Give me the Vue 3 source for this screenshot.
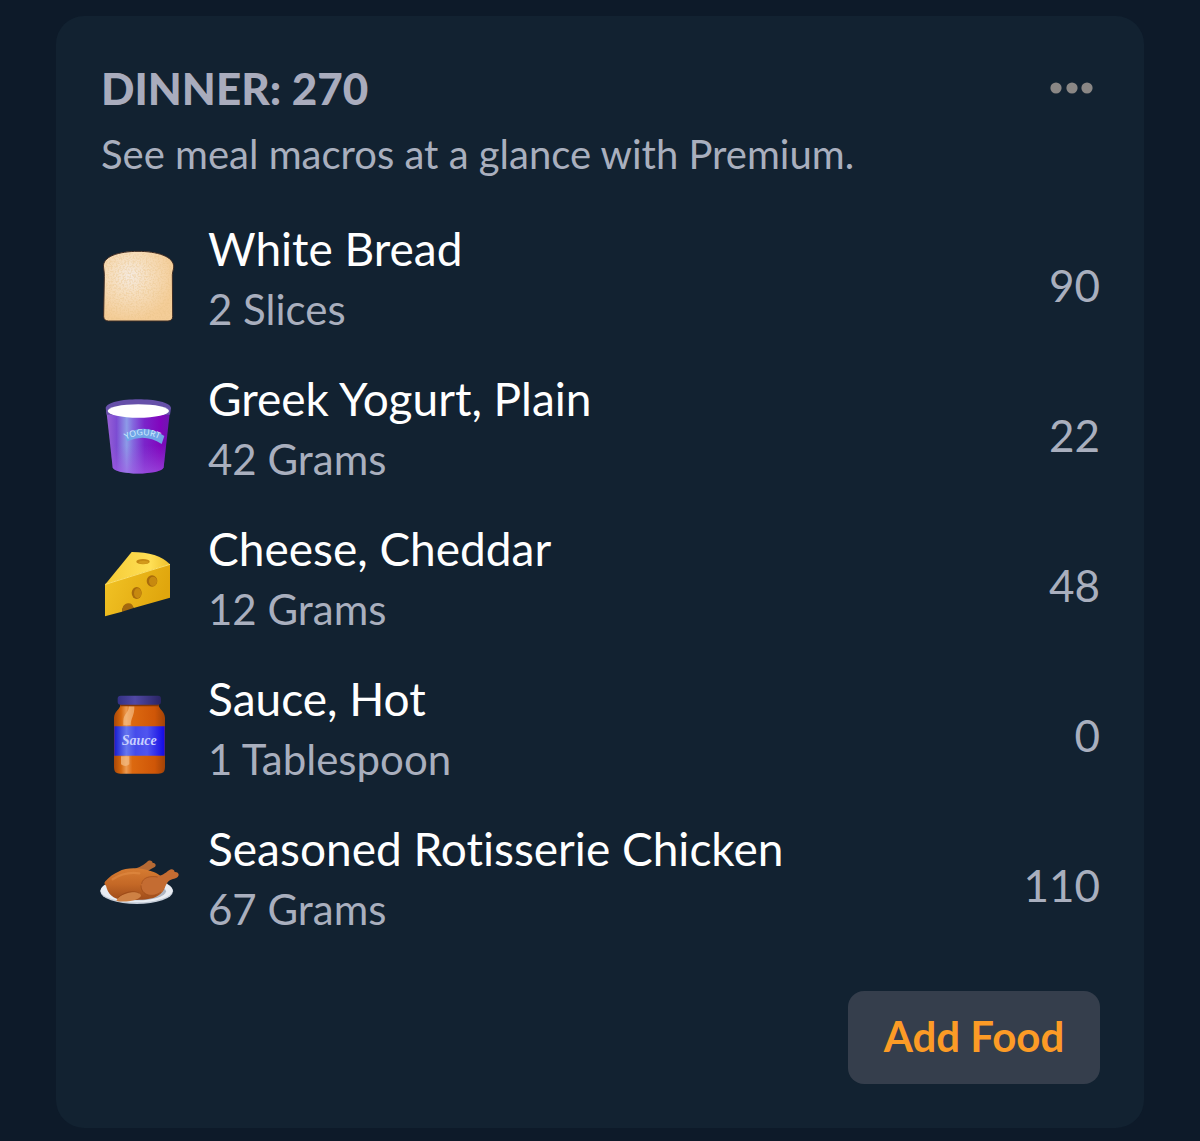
<script setup>
const foods = [
  { icon: 'bread', name: 'White Bread', amount: '2 Slices', calories: 90 },
  { icon: 'yogurt', name: 'Greek Yogurt, Plain', amount: '42 Grams', calories: 22 },
  { icon: 'cheese', name: 'Cheese, Cheddar', amount: '12 Grams', calories: 48 },
  { icon: 'sauce', name: 'Sauce, Hot', amount: '1 Tablespoon', calories: 0 },
  { icon: 'chicken', name: 'Seasoned Rotisserie Chicken', amount: '67 Grams', calories: 110 },
]
</script>

<template>
  <main class="page">
    <section class="card" aria-labelledby="meal-title">
      <header class="head">
        <h1 id="meal-title" class="title">DINNER: 270</h1>
        <button class="more" type="button" aria-label="Meal options">
          <svg width="44" height="12" viewBox="0 0 44 12" fill="#8a8785">
            <circle cx="6" cy="6" r="5.6" /><circle cx="22" cy="6" r="5.6" /><circle cx="37" cy="6" r="5.6" />
          </svg>
        </button>
      </header>
      <p class="note">See meal macros at a glance with Premium.</p>

      <ul class="foods">
        <li v-for="food in foods" :key="food.name" class="food">
          <svg v-if="food.icon === 'bread'" class="icon" viewBox="29 27 240 240" aria-hidden="true">
            <defs>
              <radialGradient id="crumb" gradientUnits="userSpaceOnUse" cx="122" cy="118" r="135">
                <stop offset="0" stop-color="#f5eadf" /><stop offset=".4" stop-color="#f6dfc0" /><stop offset="1" stop-color="#f4cd98" />
              </radialGradient>
              <filter id="grain" x="0" y="0" width="1" height="1">
                <feTurbulence type="fractalNoise" baseFrequency=".2" numOctaves="2" seed="4" />
                <feColorMatrix values="0 0 0 0 .82  0 0 0 0 .55  0 0 0 0 .25  0 0 0 4 -1.7" />
                <feComposite in2="SourceGraphic" operator="in" />
              </filter>
            </defs>
            <path d="M43 96C36 60 92 46 146 46s111 14 107 50c-1 8-4 12-4 20l1 125c0 9-5 14-14 14H57c-9 0-14-5-14-14l2-120c0-10-1-16-2-25Z" fill="url(#crumb)" stroke="#3d2a22" stroke-width="3" />
            <path d="M46 96C40 64 92 50 146 50s107 14 103 46c-1 8-4 12-4 20l1 125c0 7-4 10-11 10H58c-7 0-11-3-11-10l2-120c0-10-2-16-3-25Z" fill="#d9a468" filter="url(#grain)" opacity=".4" />
          </svg>

          <svg v-else-if="food.icon === 'yogurt'" class="icon" viewBox="27 31 240 240" aria-hidden="true">
            <defs>
              <linearGradient id="cup" x1="0" x2="1">
                <stop offset="0" stop-color="#9a62d6" /><stop offset=".16" stop-color="#7c4cd2" /><stop offset=".32" stop-color="#8d9be8" /><stop offset=".42" stop-color="#8468de" /><stop offset=".6" stop-color="#7b24ca" /><stop offset=".85" stop-color="#8205bd" /><stop offset="1" stop-color="#6c17ae" />
              </linearGradient>
              <linearGradient id="cup-fade" x1="0" x2="0" y1="0" y2="1">
                <stop offset=".55" stop-color="#9b50dc" stop-opacity="0" /><stop offset="1" stop-color="#a45ce6" stop-opacity=".65" />
              </linearGradient>
              <path id="label-arc" d="M108 165Q162 136 218 169" />
            </defs>
            <path d="M49 78l19 170c4 25 148 25 153 0l19-170Z" fill="url(#cup)" />
            <path d="M49 78l19 170c4 25 148 25 153 0l19-170Z" fill="url(#cup-fade)" />
            <path d="M47 70C51 35 239 35 243 70l-3 20H50Z" fill="#6650a9" />
            <ellipse cx="145" cy="79" rx="92" ry="20" fill="#fff" />
            <path d="M103 150Q163 112 223 154l-8 24Q164 145 112 170Z" fill="#71a5e7" />
            <text class="cup-text"><textPath href="#label-arc">YOGURT</textPath></text>
          </svg>

          <svg v-else-if="food.icon === 'cheese'" class="icon" viewBox="27 20 240 240" aria-hidden="true">
            <defs>
              <linearGradient id="rind" x1="0" x2="1" y2=".3">
                <stop offset="0" stop-color="#f2c426" /><stop offset="1" stop-color="#e0a60d" />
              </linearGradient>
              <linearGradient id="top" x1="0" x2="1">
                <stop offset="0" stop-color="#f5cb36" /><stop offset=".7" stop-color="#ffdf55" /><stop offset="1" stop-color="#edbf2b" />
              </linearGradient>
            </defs>
            <path d="M45 138L240 78v100l-109 31q-9-15-23-10-10 3-12 21l-51 14Z" fill="url(#rind)" />
            <path d="M46 138L125 41q79 0 115 37Z" fill="url(#top)" />
            <path d="M46 138L240 78" fill="none" stroke="#ffe168" stroke-width="3" />
            <ellipse cx="159" cy="70" rx="20" ry="8" fill="#c58812" />
            <ellipse cx="161" cy="72" rx="15" ry="5" fill="#d39a1b" />
            <ellipse cx="186" cy="128" rx="16" ry="17" fill="#a86b0c" />
            <ellipse cx="189" cy="129" rx="12" ry="14" fill="#c7890f" />
            <ellipse cx="140" cy="164" rx="15" ry="18" fill="#a86b0c" />
            <ellipse cx="143" cy="165" rx="11" ry="15" fill="#c7890f" />
            <path d="M96 220c1-16 7-24 18-25 9-1 15 5 17 14Z" fill="#a3690e" />
          </svg>

          <svg v-else-if="food.icon === 'sauce'" class="icon" viewBox="27 34 240 240" aria-hidden="true">
            <defs>
              <linearGradient id="jar" x1="0" x2="1">
                <stop offset="0" stop-color="#a84708" /><stop offset=".14" stop-color="#d5670c" /><stop offset=".24" stop-color="#ec9a50" /><stop offset=".36" stop-color="#dc6910" /><stop offset=".8" stop-color="#cf5607" /><stop offset="1" stop-color="#a14206" />
              </linearGradient>
              <linearGradient id="label" x1="0" x2="1">
                <stop offset="0" stop-color="#171ccf" /><stop offset=".24" stop-color="#6577ef" /><stop offset=".42" stop-color="#454ceb" /><stop offset=".65" stop-color="#5055ef" /><stop offset="1" stop-color="#1209e4" />
              </linearGradient>
              <linearGradient id="lid" x1="0" x2="1">
                <stop offset="0" stop-color="#343184" /><stop offset=".4" stop-color="#5148a4" /><stop offset="1" stop-color="#292463" />
              </linearGradient>
            </defs>
            <path d="M91 63h115c0 14 19 19 19 40v145c0 18-6 22-20 22H92c-14 0-20-4-20-22V103c0-21 19-26 19-40Z" fill="url(#jar)" />
            <path d="M117 68c-1 20-17 23-17 45v12h22c0-22 12-28 11-57Z" fill="#f6c18b" opacity=".65" />
            <path d="M93 218h25v24q-12 10-25 0Z" fill="#f4bd86" opacity=".7" />
            <path d="M73 128h151v88H73Z" fill="url(#label)" />
            <path d="M91 61h116v7H91Z" fill="#863704" />
            <rect x="83" y="36" width="130" height="27" rx="9" fill="url(#lid)" />
            <text class="jar-text" x="95" y="184">Sauce</text>
          </svg>

          <svg v-else class="icon" viewBox="27 -9 240 240" aria-hidden="true">
            <defs>
              <linearGradient id="skin" x1="0" x2="0" y1="0" y2="1">
                <stop offset="0" stop-color="#d67c32" /><stop offset=".5" stop-color="#c46826" /><stop offset="1" stop-color="#9f4c1a" />
              </linearGradient>
            </defs>
            <ellipse cx="140" cy="130" rx="109" ry="38" fill="#c5cdd8" />
            <ellipse cx="140" cy="127" rx="108" ry="36" fill="#e9edf3" />
            <ellipse cx="142" cy="130" rx="86" ry="27" fill="#aeb6c3" />
            <path d="M132 64c19-8 29-13 39-22 7-8 17-4 17 3 8-1 13 7 5 13-9 6-21 9-29 19Z" fill="#b66a34" />
            <path d="M46 100c12-15 25-22 39-29 27-15 69-12 99-1 20 6 36 18 42 33 0 17-6 34-29 44-27 12-70 8-99 9-29-3-45-19-50-43-5-3-6-9-2-13Z" fill="url(#skin)" />
            <path d="M153 113c2-22 22-31 47-29 16 0 25-8 37-17 8-6 16-2 17 5 10-1 16 8 9 15-8 7-20 5-29 14-8 9-10 27-24 35-22 12-53 9-57-23Z" fill="#c46c32" />
            <path d="M153 112c0 30 35 39 60 20" fill="none" stroke="#8d3f12" stroke-width="3" opacity=".5" />
            <path d="M155 108c2-20 26-25 48-21" fill="none" stroke="#a14f1b" stroke-width="3" opacity=".7" />
            <path d="M79 158c9-16 25-20 45-25 16-4 29 2 29 11-9 16-55 20-74 14Z" fill="#ce8144" />
            <path d="M84 149c18-17 47-23 64-13" fill="none" stroke="#8d3f12" stroke-width="3" opacity=".5" />
            <path d="M68 94q36-24 80-18" fill="none" stroke="#ea9850" stroke-width="7" stroke-linecap="round" opacity=".4" />
          </svg>

          <div class="text">
            <h2 class="name">{{ food.name }}</h2>
            <p class="amount">{{ food.amount }}</p>
          </div>
          <span class="calories">{{ food.calories }}</span>
        </li>
      </ul>

      <button class="add" type="button">Add Food</button>
    </section>
  </main>
</template>

<style>
body {
  margin: 0;
  background: #0d1a29;
}
</style>

<style scoped>
.page {
  padding: 16px 56px 13px;
  font-family: Lato, "Open Sans", sans-serif;
  font-variant-ligatures: none;
  color: #a9afbe;
}
.card {
  display: flex;
  flex-direction: column;
  padding: 44px 44px 44px 43px;
  border-radius: 28px;
  background: #122231;
}
.head {
  display: flex;
  align-items: center;
  justify-content: space-between;
  padding-left: 2px;
}
.title {
  margin: 0;
  font-size: 44px;
  line-height: 56px;
  font-weight: 900;
  color: #a9acbd;
}
.more {
  display: flex;
  margin-right: 6px;
  padding: 16px 0;
  border: 0;
  background: none;
}
.note {
  margin: 12px 0 0 2px;
  font-size: 40px;
  line-height: 52px;
}
.foods {
  display: flex;
  flex-direction: column;
  gap: 30px;
  margin: 39px 0 0;
  padding: 0;
  list-style: none;
}
.food {
  display: flex;
  align-items: center;
}
.icon {
  flex: none;
  width: 80px;
  height: 80px;
  margin: 12px 29px 0 0;
}
.text {
  flex: 1;
}
.name,
.amount {
  margin: 0;
  line-height: 60px;
  font-weight: 400;
}
.name {
  font-size: 46px;
  color: #fff;
}
.amount {
  font-size: 42px;
}
.calories {
  margin-top: 12px;
  font-size: 44px;
  line-height: 60px;
}
.add {
  align-self: flex-end;
  width: 252px;
  height: 93px;
  margin-top: 52px;
  padding-bottom: 4px;
  border: 0;
  border-radius: 16px;
  background: #353e4c;
  color: #fc9b26;
  font-family: inherit;
  font-size: 42px;
  font-weight: 700;
}
.cup-text {
  font: 400 26px "Open Sans", sans-serif;
  fill: #d6edff;
}
.jar-text {
  font: italic 700 42px "Liberation Serif", serif;
  fill: #c9d0ff;
}
</style>
